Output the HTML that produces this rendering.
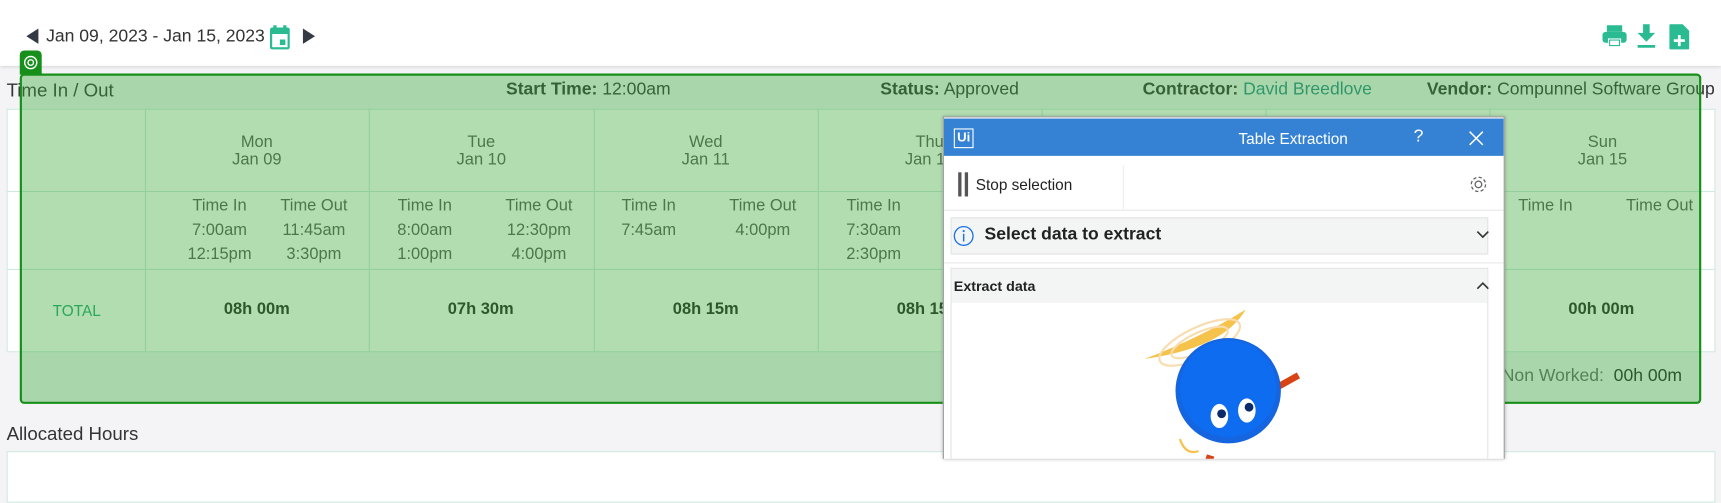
<!DOCTYPE html>
<html><head><meta charset="utf-8"><style>
*{margin:0;padding:0;box-sizing:border-box}
html,body{width:1721px;height:458px;overflow:hidden;background:#f4f4f6}
#w{position:absolute;left:0;top:0;width:1568px;height:418px;transform:scale(1.09758);transform-origin:0 0;font-family:"Liberation Sans",sans-serif;color:#333}
.a{position:absolute;white-space:nowrap}
.hdr{position:absolute;left:0;top:0;width:1568px;height:60px;background:#fff;box-shadow:0 1px 3px rgba(0,0,0,.12)}
.tbl{position:absolute;left:6px;top:99px;width:1557px;height:222px;background:#fff;border:1px solid #cfe9df}
.vl{position:absolute;top:99px;height:222px;width:1px;background:#cfe9df}
.hl{position:absolute;left:6px;width:1557px;height:1px;background:#cfe9df}
.c{position:absolute;text-align:center;font-size:15px;color:#555;line-height:16px}
.t{position:absolute;text-align:center;font-size:15px;color:#555;width:90px;line-height:22px}
.tot{position:absolute;top:273px;width:204px;text-align:center;font-weight:bold;font-size:15px;color:#222}
</style></head><body><div id="w">
<div class="hdr"></div>
<svg class="a" style="left:24px;top:26px" width="12" height="14"><path d="M11 0L0 7L11 14Z" fill="#333a44"/></svg>
<div class="a" style="left:42px;top:25px;font-size:16px;color:#333">Jan 09, 2023 - Jan 15, 2023</div>
<svg class="a" style="left:245px;top:22px" width="20" height="24"><rect x="1" y="3" width="18" height="20" rx="2" fill="#2bbb93"/><rect x="4" y="1" width="3" height="4" fill="#2bbb93"/><rect x="13" y="1" width="3" height="4" fill="#2bbb93"/><rect x="3" y="9" width="14" height="12" fill="#fff"/><rect x="10" y="14" width="5" height="5" fill="#2bbb93"/></svg>
<svg class="a" style="left:275px;top:26px" width="12" height="14"><path d="M1 0L12 7L1 14Z" fill="#333a44"/></svg>
<svg class="a" style="left:1459px;top:22px" width="24" height="22"><rect x="5" y="1" width="14" height="6" fill="#2bbb93"/><rect x="1" y="7" width="22" height="10" rx="3" fill="#2bbb93"/><rect x="6" y="13" width="12" height="8" fill="#fff"/><rect x="7" y="14" width="10" height="6" fill="#2bbb93"/><rect x="8" y="15" width="8" height="4" fill="#fff"/></svg>
<svg class="a" style="left:1491px;top:22px" width="18" height="22"><path d="M6 0H12V8H17L9 16L1 8H6Z" fill="#2bbb93"/><rect x="1" y="19" width="16" height="2.5" fill="#2bbb93"/></svg>
<svg class="a" style="left:1520px;top:22px" width="20" height="24"><path d="M2 0H13L19 6V22Q19 23 18 23H2Q1 23 1 22V1Q1 0 2 0Z" fill="#2bbb93"/><path d="M10 10V20M5 15H15" stroke="#fff" stroke-width="2.5"/></svg>

<div class="a" style="left:6px;top:73px;font-size:17px;color:#333">Time In / Out</div>
<div class="a" style="left:461px;top:73px;font-size:16px;color:#333"><b>Start Time:</b> 12:00am</div>
<div class="a" style="left:802px;top:73px;font-size:16px;color:#333"><b>Status:</b> Approved</div>
<div class="a" style="left:1041px;top:73px;font-size:16px;color:#333"><b>Contractor:</b> <span style="color:#2a8a8a">David Breedlove</span></div>
<div class="a" style="left:1300px;top:73px;font-size:16px;color:#333"><b>Vendor:</b> Compunnel Software Group</div>

<div class="tbl"></div>
<div class="hl" style="top:174px"></div><div class="hl" style="top:245px"></div>
<div class="vl" style="left:132px"></div><div class="vl" style="left:336px"></div><div class="vl" style="left:541px"></div><div class="vl" style="left:745px"></div><div class="vl" style="left:949px"></div><div class="vl" style="left:1153px"></div><div class="vl" style="left:1357px"></div>

<div class="c" style="left:132px;top:122px;width:204px">Mon<br>Jan 09</div>
<div class="c" style="left:336px;top:122px;width:205px">Tue<br>Jan 10</div>
<div class="c" style="left:541px;top:122px;width:204px">Wed<br>Jan 11</div>
<div class="c" style="left:745px;top:122px;width:204px">Thu<br>Jan 12</div>
<div class="c" style="left:1357px;top:122px;width:206px">Sun<br>Jan 15</div>

<div class="t" style="left:155px;top:177px">Time In<br>7:00am<br>12:15pm</div>
<div class="t" style="left:241px;top:177px">Time Out<br>11:45am<br>3:30pm</div>
<div class="t" style="left:342px;top:177px">Time In<br>8:00am<br>1:00pm</div>
<div class="t" style="left:446px;top:177px">Time Out<br>12:30pm<br>4:00pm</div>
<div class="t" style="left:546px;top:177px">Time In<br>7:45am</div>
<div class="t" style="left:650px;top:177px">Time Out<br>4:00pm</div>
<div class="t" style="left:751px;top:177px">Time In<br>7:30am<br>2:30pm</div>
<div class="t" style="left:1363px;top:177px">Time In</div>
<div class="t" style="left:1467px;top:177px">Time Out</div>

<div class="a" style="left:48px;top:275px;font-size:14px;color:#1fa56a">TOTAL</div>
<div class="tot" style="left:132px">08h 00m</div>
<div class="tot" style="left:336px">07h 30m</div>
<div class="tot" style="left:541px">08h 15m</div>
<div class="tot" style="left:745px">08h 15m</div>
<div class="tot" style="left:1357px">00h 00m</div>
<div class="a" style="left:1330px;top:334px;font-size:16px;color:#666">Total Non Worked:&nbsp; <span style="color:#222">00h 00m</span></div>

<div class="a" style="left:6px;top:386px;font-size:17px;color:#333">Allocated Hours</div>
<div class="a" style="left:6px;top:411px;width:1557px;height:47px;background:#fff;border:1px solid #cfe9df"></div>

<div class="a" style="left:18px;top:67px;width:1532px;height:301px;background:rgba(60,170,60,.4);border:2px solid #16901a;border-radius:4px"></div>
<div class="a" style="left:18px;top:46px;width:20px;height:22px;background:#16901a;border-radius:4px 4px 0 0"></div>
<svg class="a" style="left:21px;top:50px" width="14" height="14"><circle cx="7" cy="7" r="5.5" fill="none" stroke="#fff" stroke-width="1.3"/><circle cx="7" cy="7" r="2.5" fill="none" stroke="#fff" stroke-width="1.3"/></svg>

<div class="a" style="left:859px;top:106px;width:512px;height:312px;overflow:hidden;background:#fff;border:1px solid #9a9a9a;border-bottom:none;box-shadow:0 0 3px rgba(0,0,0,.3)">
 <div class="a" style="left:0;top:1px;width:510px;height:34px;background:#3582d4"></div>
 <div class="a" style="left:9px;top:10px;width:18px;height:18px;border:1.5px solid #fff;color:#fff;font-size:12px;font-weight:bold;text-align:center;line-height:15px">Ui</div>
 <div class="a" style="left:0;top:11px;width:368px;text-align:right;color:#fff;font-size:14px">Table Extraction</div>
 <div class="a" style="left:428px;top:9px;color:#fff;font-size:16px">?</div>
 <svg class="a" style="left:478px;top:12px" width="14" height="14"><path d="M1 1L13 13M13 1L1 13" stroke="#fff" stroke-width="1.4"/></svg>
 <div class="a" style="left:13px;top:50px;width:3px;height:22px;background:#555"></div>
 <div class="a" style="left:19px;top:50px;width:3px;height:22px;background:#555"></div>
 <div class="a" style="left:29px;top:53px;font-size:14px;color:#222">Stop selection</div>
 <div class="a" style="left:163px;top:44px;width:1px;height:40px;background:#eee"></div>
 <svg class="a" style="left:477px;top:51px" width="20" height="20"><circle cx="10" cy="10" r="3" fill="none" stroke="#666" stroke-width="1.2"/><circle cx="10" cy="10" r="6.5" fill="none" stroke="#666" stroke-width="1.2" stroke-dasharray="3 2.1"/></svg>
 <div class="a" style="left:0;top:84px;width:510px;height:1px;background:#e8e8e8"></div>
 <div class="a" style="left:6px;top:91px;width:490px;height:34px;background:#f3f4f4;border:1px solid #e3e3e3"></div>
 <svg class="a" style="left:8px;top:98px" width="20" height="20"><circle cx="10" cy="10" r="8.5" fill="none" stroke="#1a73e8" stroke-width="1.2"/><path d="M10 8V15" stroke="#1a73e8" stroke-width="1.3"/><circle cx="10" cy="5.5" r="1" fill="#1a73e8"/></svg>
 <div class="a" style="left:37px;top:98px;font-size:16px;font-weight:bold;color:#222">Select data to extract</div>
 <svg class="a" style="left:485px;top:103px" width="12" height="8"><path d="M1 1L6 6L11 1" fill="none" stroke="#333" stroke-width="1.5"/></svg>
 <div class="a" style="left:0;top:132px;width:510px;height:1px;background:#e8e8e8"></div>
 <div class="a" style="left:6px;top:137px;width:490px;height:215px;border:1px solid #e3e3e3;border-bottom:none"></div>
 <div class="a" style="left:7px;top:138px;width:488px;height:31px;background:#f3f4f4"></div>
 <div class="a" style="left:9px;top:146px;font-size:13px;font-weight:bold;color:#222">Extract data</div>
 <svg class="a" style="left:485px;top:149px" width="12" height="8"><path d="M1 7L6 2L11 7" fill="none" stroke="#333" stroke-width="1.5"/></svg>
 <svg class="a" style="left:175px;top:170px" width="160" height="142">
  <path d="M8 50Q60 30 100 5Q80 40 8 50Z" fill="#f5c24b"/>
  <ellipse cx="58" cy="35" rx="40" ry="14" fill="none" stroke="#f8ddb0" stroke-width="2" transform="rotate(-25 58 35)"/>
  <ellipse cx="58" cy="35" rx="28" ry="9" fill="none" stroke="#f8ddb0" stroke-width="2" transform="rotate(-25 58 35)"/>
  <path d="M130 75L148 65" stroke="#d84315" stroke-width="6"/>
  <circle cx="84" cy="79" r="48" fill="#1565e0"/>
  <circle cx="84" cy="77" r="44" fill="#0d6cf0"/>
  <ellipse cx="76" cy="102" rx="8" ry="11" fill="#fff"/><circle cx="78" cy="100" r="4" fill="#0a2a6a"/>
  <ellipse cx="101" cy="97" rx="8" ry="11" fill="#fff"/><circle cx="103" cy="94" r="4" fill="#0a2a6a"/>
  <path d="M68 138L58 170" stroke="#d84315" stroke-width="7"/>
  <path d="M40 123Q45 138 57 134" fill="none" stroke="#f5c24b" stroke-width="2"/>
 </svg>
</div>
</div></body></html>
